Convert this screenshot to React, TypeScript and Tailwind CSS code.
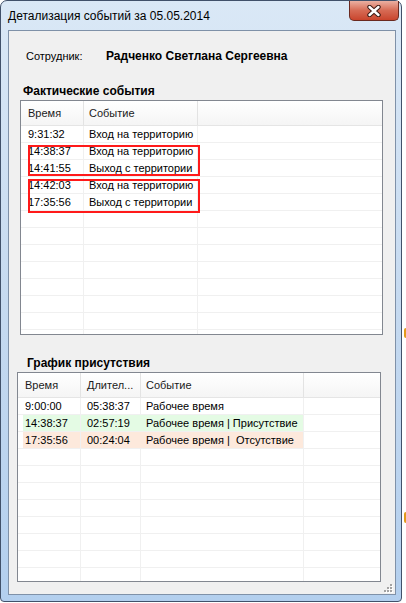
import React from "react";

type Col = { w?: string; pl: string };

const factCols: Col[] = [
  { w: "w-[63px]", pl: "pl-[7px]" },
  { w: "w-[114px]", pl: "pl-[5px]" },
  { pl: "pl-[5px]" },
];

const planCols: Col[] = [
  { w: "w-[63px]", pl: "pl-[7px]" },
  { w: "w-[60px]", pl: "pl-[6px]" },
  { w: "w-[163px]", pl: "pl-[5px]" },
  { pl: "pl-[5px]" },
];

const facts = [
  ["9:31:32", "Вход на территорию"],
  ["14:38:37", "Вход на территорию"],
  ["14:41:55", "Выход с территории"],
  ["14:42:03", "Вход на территорию"],
  ["17:35:56", "Выход с территории"],
];

const plan: { cells: string[]; bg?: string }[] = [
  { cells: ["9:00:00", "05:38:37", "Рабочее время"] },
  { cells: ["14:38:37", "02:57:19", "Рабочее время | Присутствие"], bg: "green" },
  { cells: ["17:35:56", "00:24:04", "Рабочее время |  Отсутствие"], bg: "peach" },
];

function HeaderRow({ cols, titles }: { cols: Col[]; titles: string[] }) {
  return (
    <div className="flex h-[25px] shrink-0 border-b border-[#e5e5e5] bg-gradient-to-b from-white to-[#f5f5f5] text-[#1b1b1b]">
      {cols.map((c, i) => (
        <div
          key={i}
          className={`${c.w ?? "flex-1"} ${c.pl} flex items-center border-r border-[#e3e3e3] last:border-r-0 whitespace-nowrap`}
        >
          {titles[i] ?? ""}
        </div>
      ))}
    </div>
  );
}

function FactTable() {
  const rows = Array.from({ length: 13 }, (_, i) => facts[i] ?? []);
  return (
    <div className="relative ml-[11px] mt-[2px] w-[363px] h-[235px] border border-[#828790] bg-white overflow-hidden">
      <HeaderRow cols={factCols} titles={["Время", "Событие", ""]} />
      {rows.map((r, i) => (
        <div key={i} className="flex h-[17px] shrink-0 border-b border-[#f0f0f0]">
          {factCols.map((c, j) => (
            <div
              key={j}
              className={`${c.w ?? "flex-1"} ${c.pl} flex items-center border-r border-[#f0f0f0] last:border-r-0 whitespace-nowrap`}
            >
              {r[j] ?? ""}
            </div>
          ))}
        </div>
      ))}
      {/* red marks drawn over the list */}
      <div className="absolute left-[7px] top-[44px] w-[172px] h-[31px] border-2 border-[#ff1a1a]" />
      <div className="absolute left-[7px] top-[78px] w-[172px] h-[34px] border-2 border-[#ff1a1a]" />
    </div>
  );
}

function PlanTable() {
  const rows = Array.from({ length: 12 }, (_, i) => plan[i] ?? { cells: [] });
  return (
    <div className="ml-[8px] mt-[2px] w-[364px] h-[210px] border border-[#828790] bg-white overflow-hidden">
      <HeaderRow cols={planCols} titles={["Время", "Длител...", "Событие", ""]} />
      {rows.map((r, i) => {
        const bg = r.bg === "green" ? "bg-[#e4fbe4]" : r.bg === "peach" ? "bg-[#fde9dc]" : "";
        const line = r.bg === "green" ? "border-r-[#e4fbe4]" : r.bg === "peach" ? "border-r-[#fde9dc]" : "";
        return (
          <div key={i} className="flex h-[17px] shrink-0 border-b border-[#f0f0f0]">
            <div className="w-[63px] pl-[5px] flex border-r border-[#f0f0f0]">
              <div className={`flex-1 pl-[2px] flex items-center ${bg}`}>{r.cells[0] ?? ""}</div>
            </div>
            <div className={`w-[60px] pl-[6px] flex items-center border-r border-[#f0f0f0] ${bg} ${line}`}>
              {r.cells[1] ?? ""}
            </div>
            <div className={`w-[163px] pl-[5px] flex items-center border-r border-[#f0f0f0] whitespace-pre ${bg}`}>
              {r.cells[2] ?? ""}
            </div>
            <div className="flex-1" />
          </div>
        );
      })}
    </div>
  );
}

function CloseButton() {
  return (
    <div className="ml-auto mr-[2px] w-[50px] h-[20px] rounded-b-[5px] border border-t-0 border-[#6a2a20] bg-gradient-to-b from-[#eab0a2] via-[#d66a54] to-[#c9442c] flex items-center justify-center">
      <svg width="16" height="12" viewBox="0 0 16 12">
        <path d="M3.5 2 L12.5 10 M12.5 2 L3.5 10" stroke="#3b1a14" strokeWidth="4.4" strokeLinecap="round" />
        <path d="M3.5 2 L12.5 10 M12.5 2 L3.5 10" stroke="#ffffff" strokeWidth="2.4" strokeLinecap="round" />
      </svg>
    </div>
  );
}

function Grip() {
  const dots = [
    [6, 0],
    [3, 3],
    [6, 3],
    [0, 6],
    [3, 6],
    [6, 6],
  ];
  return (
    <svg className="absolute right-[2px] bottom-[1px]" width="9" height="9" viewBox="0 0 9 9">
      {dots.map(([x, y], i) => (
        <g key={i}>
          <rect x={x + 1} y={y + 1} width="2" height="2" fill="#ffffff" />
          <rect x={x} y={y} width="2" height="2" fill="#a3a3a3" />
        </g>
      ))}
    </svg>
  );
}

export default function App() {
  return (
    <div className="relative w-[406px] h-[603px] bg-white overflow-hidden font-['Liberation_Sans',Arial,sans-serif] text-[11px] text-black">
      <div className="w-[402px] h-[602px] rounded-t-[7px] rounded-b-[4px] border border-[#41516a] bg-gradient-to-b from-[#dae8f6] via-[#c6daf0] to-[#b3cfee] flex flex-col">
        <div className="h-[29px] flex items-start shrink-0">
          <span className="mt-[8px] ml-[7px] text-[12px] leading-[14px] text-black whitespace-nowrap">
            Детализация событий за 05.05.2014
          </span>
          <CloseButton />
        </div>
        <div className="relative ml-[7px] w-[388px] h-[565px] border border-[#7f91a8] bg-[#f0f0f0] flex flex-col">
          <div className="mt-[18px] ml-[17px] flex items-center h-[14px]">
            <span className="w-[80px]">Сотрудник:</span>
            <span className="font-bold text-[12px]">Радченко Светлана Сергеевна</span>
          </div>
          <div className="mt-[21px] ml-[14px] font-bold text-[12px] leading-[14px]">Фактические события</div>
          <FactTable />
          <div className="mt-[21px] ml-[18px] font-bold text-[12px] leading-[14px]">График присутствия</div>
          <PlanTable />
          <Grip />
        </div>
      </div>
      <span className="absolute left-[404px] top-[328px] w-[4px] h-[10px] rounded-full bg-[#e39a1c]" />
      <span className="absolute left-[404px] top-[512px] w-[4px] h-[11px] rounded-full bg-[#e39a1c]" />
    </div>
  );
}
